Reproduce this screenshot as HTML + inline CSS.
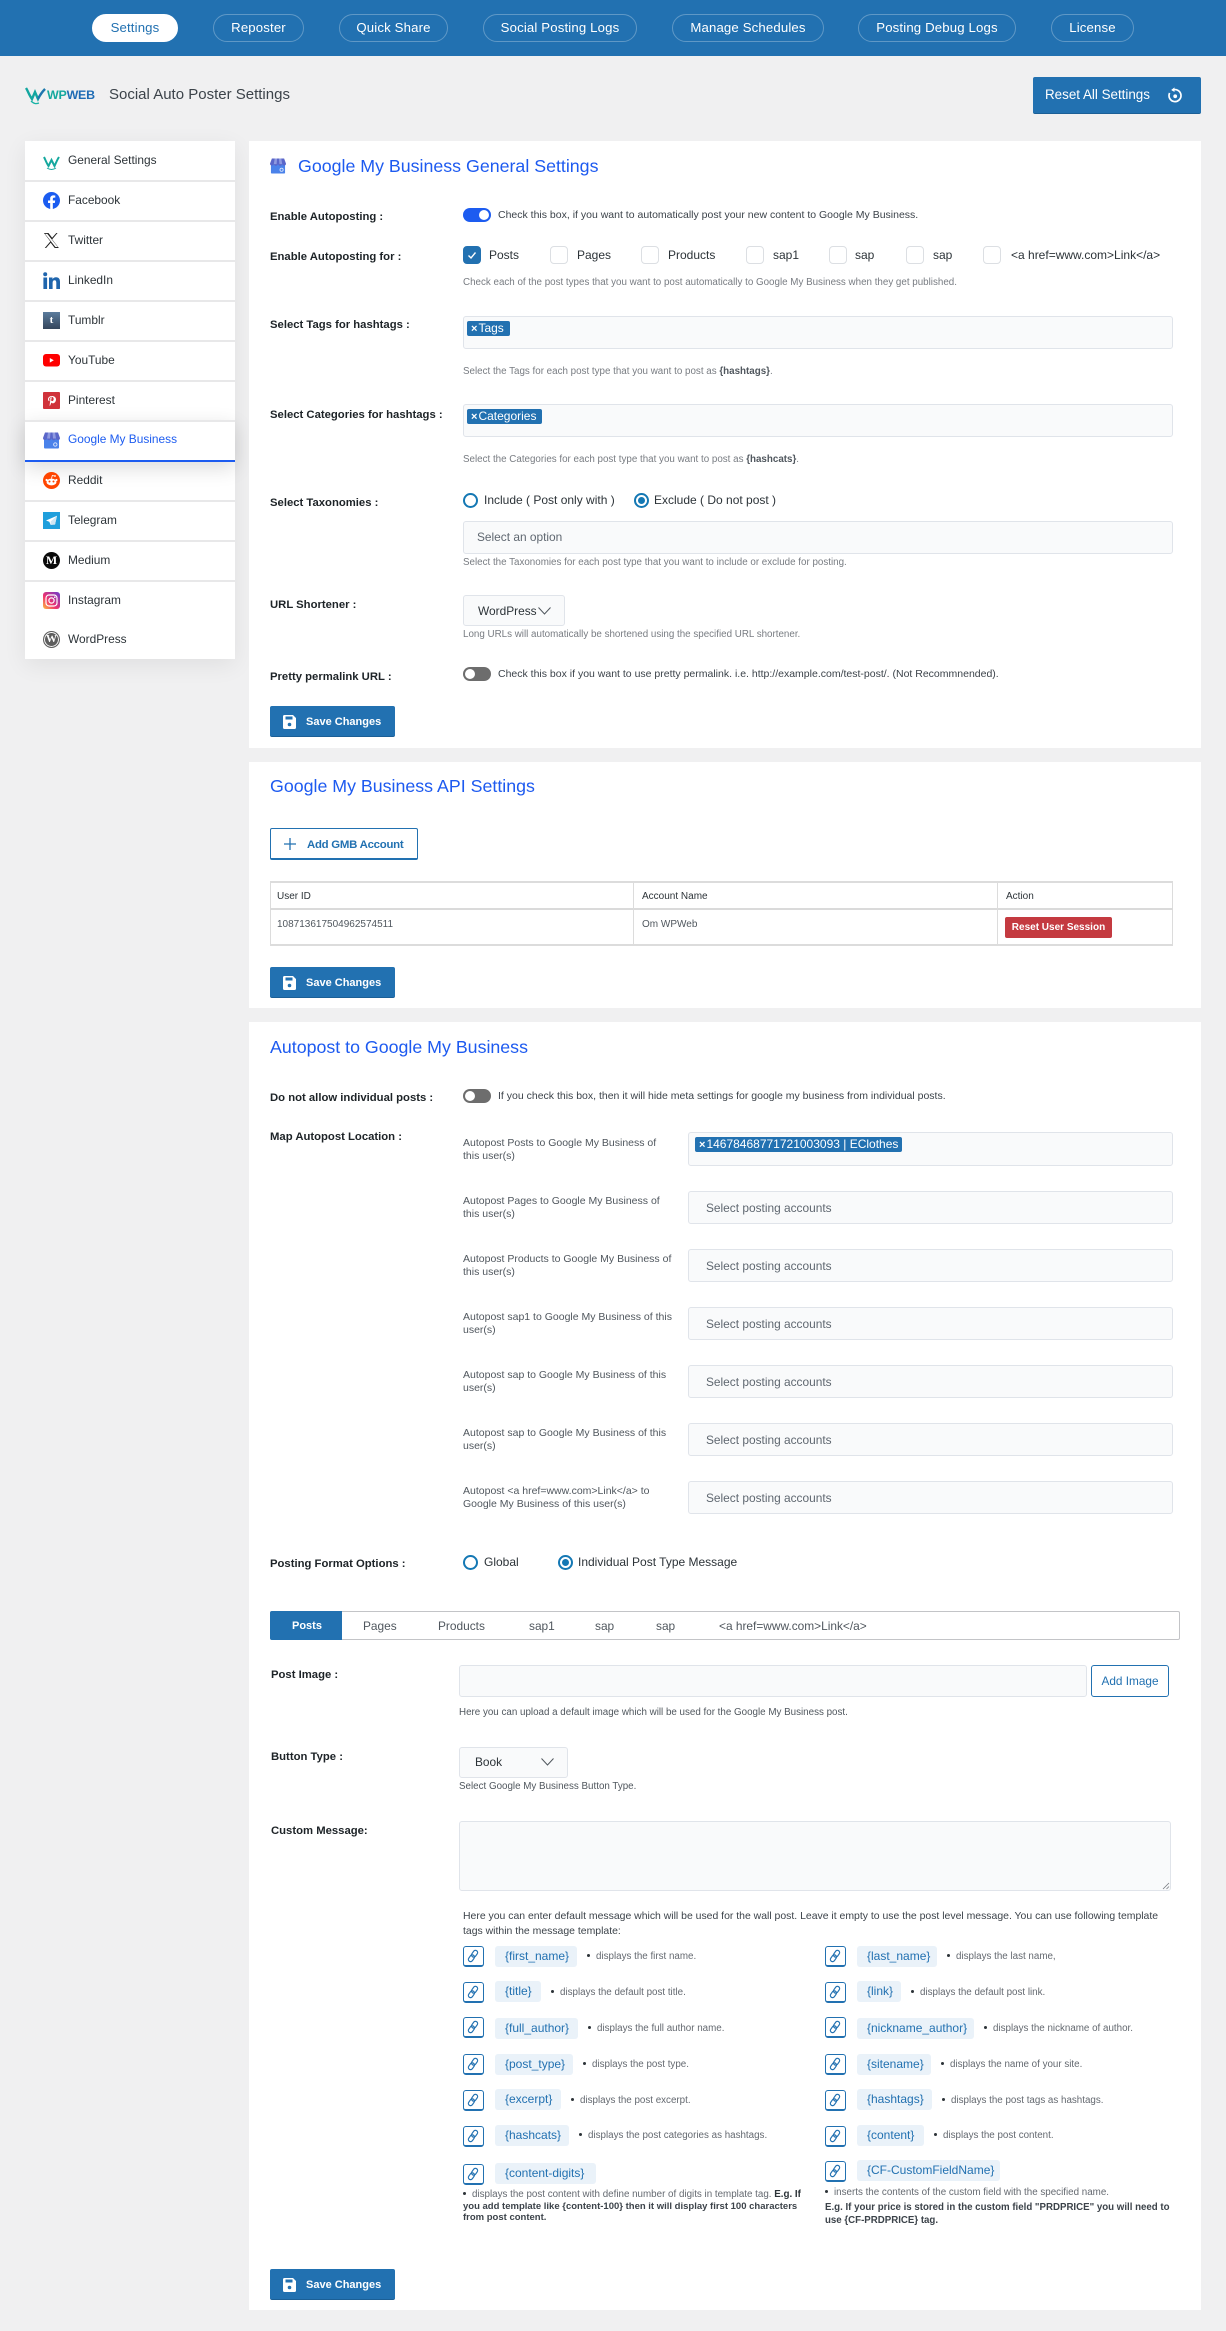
<!DOCTYPE html>
<html lang="en"><head><meta charset="utf-8"><title>Social Auto Poster Settings</title>
<style>
*{box-sizing:border-box}
html,body{margin:0;padding:0}
body{width:1226px;height:2331px;background:#f0f0f1;position:relative;overflow:hidden;font-family:"Liberation Sans",Arial,sans-serif;color:#2c3338}
.a{position:absolute}
.t{position:absolute;white-space:nowrap;line-height:20px;height:20px}
#top{position:absolute;left:0;top:0;width:1226px;height:56px;background:#2271b1}
.pill{position:absolute;top:14px;height:28px;border:1px solid rgba(255,255,255,.28);border-radius:14px;color:#fff;font-size:13.2px;line-height:26px;text-align:center;letter-spacing:.15px;white-space:nowrap}
.pill.on{background:#fff;color:#2271b1;border-color:#fff}
#side{position:absolute;left:25px;top:141px;width:210px;height:518px;background:#fff;box-shadow:0 6px 22px rgba(0,0,0,.07)}
.sep{position:absolute;left:25px;width:210px;height:2px;background:#e8e8e9}
.nav{position:absolute;left:68px;font-size:11.9px;color:#2c3338;white-space:nowrap;line-height:20px}
.ic{position:absolute;left:43px;width:17px;height:17px}
.panel{position:absolute;left:249px;width:952px;background:#fff}
h2{position:absolute;margin:0;font-weight:400;font-size:17.8px;line-height:24px;color:#1d5af0;white-space:nowrap}
.lb{position:absolute;left:270px;font-weight:700;font-size:11.3px;line-height:20px;color:#1d2327;white-space:nowrap}
.tx{position:absolute;font-size:10.5px;line-height:20px;color:#3c434a;white-space:nowrap}
.ds{position:absolute;font-size:9.8px;line-height:20px;color:#787c82;white-space:nowrap}
.ds b{color:#50575e}
.tg{position:absolute;width:28px;height:14px;border-radius:7px;background:#1d5cf0}
.tg i{position:absolute;top:2px;right:2px;width:10px;height:10px;border-radius:50%;background:#fff}
.tg.off{background:#6d6d6d}
.tg.off i{right:auto;left:2px}
.cb{position:absolute;top:246px;width:18px;height:18px;background:#fff;border:1px solid #dcdfe3;border-radius:4px}
.cb.on{background:#2271b1;border-color:#2271b1}
.cl{position:absolute;top:245px;font-size:12px;line-height:20px;color:#2c3338;white-space:nowrap}
.f{position:absolute;background:#f9fafb;border:1px solid #e0e4ea;border-radius:3px}
.ph{position:absolute;font-size:11.9px;line-height:20px;color:#5f6770;white-space:nowrap}
.tag{position:absolute;height:15px;background:#2271b1;border-radius:2px;color:#fff;font-size:12px;line-height:15px;padding-left:4px;white-space:nowrap}
.tag b{font-size:11px;margin-right:1px}
.r{position:absolute;width:15px;height:15px;border:2px solid #1478b4;border-radius:50%;background:#fff}
.r.on::after{content:"";position:absolute;left:2px;top:2px;width:7px;height:7px;border-radius:50%;background:#1478b4}
.rl{position:absolute;font-size:12px;line-height:20px;color:#2c3338;white-space:nowrap}
.save{position:absolute;left:270px;width:125px;height:31px;background:#2271b1;border-radius:2px;border-bottom:1px solid #1b5f96;color:#fff;font-weight:700;font-size:11px;line-height:32px;padding-left:36px;white-space:nowrap}
.save svg{position:absolute;left:13px;top:9px}
.th{position:absolute;font-size:10px;line-height:20px;color:#2c3338;white-space:nowrap}
.ml{position:absolute;left:463px;font-size:10.5px;line-height:12.5px;color:#50575e;white-space:nowrap}
.tb{position:absolute;top:1616px;font-size:11.9px;line-height:20px;color:#50575e;white-space:nowrap}
.lk{position:absolute;width:21px;height:21px;border:1.5px solid #2271b1;border-bottom-width:2px;border-radius:3px;background:#fff}
.lk svg{position:absolute;left:2px;top:2px}
.pl{position:absolute;height:21px;background:#eaf2f9;border-radius:3px;color:#2271b1;font-size:12px;line-height:21px;padding-left:10px;white-space:nowrap}
.dt{position:absolute;font-size:9.8px;line-height:20px;color:#646970;white-space:nowrap}
.dt::before{content:"";display:inline-block;width:3px;height:3px;border-radius:50%;background:#2c3338;margin-right:6px;vertical-align:2px}
</style></head><body>

<div id="top"></div>
<div class="pill on" style="left:92px;width:86px">Settings</div>
<div class="pill" style="left:213px;width:91px">Reposter</div>
<div class="pill" style="left:339px;width:109px">Quick Share</div>
<div class="pill" style="left:483px;width:154px">Social Posting Logs</div>
<div class="pill" style="left:672px;width:152px">Manage Schedules</div>
<div class="pill" style="left:858px;width:158px">Posting Debug Logs</div>
<div class="pill" style="left:1051px;width:83px">License</div>

<svg class="a" style="left:25px;top:86px" width="22" height="19" viewBox="0 0 22 19"><path d="M1 2C3 5 4 9 7 13L10 6 13 13C15 9 17 6 20 3" fill="none" stroke="#13a6a0" stroke-width="2.4"/><path d="M6 15C9 18 11 18 14 17" fill="none" stroke="#19b3a6" stroke-width="1.3"/><path d="M13 13C15 9 17 6 20 3" fill="none" stroke="#2271b1" stroke-width="2"/></svg>
<div class="t" style="left:47px;top:85px;font-size:12.4px;font-weight:700;letter-spacing:-.2px"><span style="color:#14a89e">WP</span><span style="color:#1f6cb5">WEB</span></div>
<div class="t" style="left:109px;top:85px;font-size:15px;color:#3c434a">Social Auto Poster Settings</div>
<div class="a" style="left:1033px;top:77px;width:168px;height:37px;background:#2271b1;border-radius:2px;border-bottom:1px solid #1b5f96"></div>
<div class="t" style="left:1045px;top:85px;font-size:13.4px;color:#fff">Reset All Settings</div>
<svg class="a" style="left:1167px;top:87px" width="16" height="16" viewBox="0 0 16 16"><path d="M5.2 3.3A6 6 0 1 1 2.6 6" fill="none" stroke="#fff" stroke-width="1.7"/><path d="M7.5.4V5L4.2 3z" fill="#fff"/><circle cx="8.2" cy="9.3" r="1.9" fill="#fff"/></svg>

<!-- sidebar -->
<div id="side"></div>
<div class="sep" style="top:180px"></div><div class="sep" style="top:220px"></div><div class="sep" style="top:260px"></div><div class="sep" style="top:300px"></div><div class="sep" style="top:340px"></div><div class="sep" style="top:380px"></div>
<div class="sep" style="top:500px"></div><div class="sep" style="top:540px"></div><div class="sep" style="top:580px"></div>
<div class="a" style="left:25px;top:420px;width:210px;height:42px;background:#fff;border-top:2px solid #e8e8e9;border-bottom:2px solid #1d5cf0;box-shadow:0 6px 20px rgba(0,0,0,.14)"></div>

<svg class="ic" style="top:154px" viewBox="0 0 17 15"><path d="M1 2C2.500 5 3.500 8 5.500 11L8.500 5 11.500 11C13 8 14 5 16 2" fill="none" stroke="#14a89e" stroke-width="2"/><path d="M4 13C7 15 10 15 13 13" fill="none" stroke="#14a89e" stroke-width="1"/></svg>
<div class="nav" style="top:150px">General Settings</div>
<svg class="ic" style="top:192px" viewBox="0 0 24 24"><path fill="#1b5cf0" d="M24 12.073c0-6.627-5.373-12-12-12s-12 5.373-12 12c0 5.990 4.388 10.954 10.125 11.854v-8.385H7.078v-3.470h3.047V9.430c0-3.007 1.792-4.669 4.533-4.669 1.312 0 2.686.235 2.686.235v2.953H15.830c-1.491 0-1.956.925-1.956 1.874v2.250h3.328l-.532 3.470h-2.796v8.385C19.612 23.027 24 18.062 24 12.073z"/></svg>
<div class="nav" style="top:190px">Facebook</div>
<svg class="ic" style="top:232px" viewBox="1 2 22 20"><path fill="#222" fill-rule="evenodd" d="M18.244 2.250h1.600l-7 8.260 8.700 11.240H16.170l-5.214-6.817L4.990 21.750H3.300l7.200-8.400L2.254 2.250H8.080l4.713 6.231zm-1.161 18.200h3L6.584 3.500H3.617z"/></svg>
<div class="nav" style="top:230px">Twitter</div>
<svg class="ic" style="top:272px" viewBox="0 0 17 17"><circle cx="2.200" cy="2.200" r="2" fill="#1f65ad"/><rect x=".4" y="5.500" width="3.700" height="11.500" fill="#1f65ad"/><path fill="#1f65ad" d="M6 5.500h3.500v1.600C10.200 6 11.500 5.200 13 5.200c3 0 4 2 4 4.800v7h-3.700v-6.200c0-1.500-.4-2.500-1.700-2.500-1.400 0-2 1-2 2.500V17H6z"/></svg>
<div class="nav" style="top:270px">LinkedIn</div>
<div class="ic" style="top:312px;height:17px;background:linear-gradient(#5b7c9d,#35465c);color:#fff;font:700 11px/17px 'Liberation Serif',serif;text-align:center">t</div>
<div class="nav" style="top:310px">Tumblr</div>
<svg class="ic" style="top:353px;height:15px" viewBox="0 0 17 13"><rect width="17" height="12.500" rx="3" fill="#f00"/><path d="M6.800 4l4 2.300-4 2.300z" fill="#fff"/></svg>
<div class="nav" style="top:350px">YouTube</div>
<svg class="ic" style="top:392px" viewBox="0 0 17 17"><rect width="17" height="17" rx="1" fill="#d0323a"/><path d="M8.800 4C6.500 4 5 5.500 5 7.300c0 1 .5 1.800 1.300 2 .3-1 .1-1.100-.1-1.700-.4-1.400.8-2.700 2.400-2.700 2.900 0 2.500 4.200.6 4.200-.8 0-1.200-.6-1-1.300l.5-1.900c.2-.9-1.200-1-1.400.3-.1.500.1 1 .1 1L6.700 12.500c-.1.600 0 1.400 0 1.500.6-.6 1-1.500 1.600-3.500.3.500.9.800 1.500.8 1.900 0 3.200-1.800 3.200-3.900C13 5.300 11.200 4 8.800 4z" fill="#fff"/></svg>
<div class="nav" style="top:390px">Pinterest</div>
<svg class="ic" style="top:432px" viewBox="0 0 17 16"><path d="M1 5h15v10a1 1 0 0 1-1 1H2a1 1 0 0 1-1-1z" fill="#4a82ea"/><path d="M2 0h13l2 5.500a2 2 0 0 1-4 0 2.200 2.200 0 0 1-4.500 0 2.200 2.200 0 0 1-4.500 0 2 2 0 0 1-4 0z" fill="#5a66c9"/><path d="M5 0h2.500l-.5 6H4zM9.500 0H12l1 6h-3z" fill="#8e9ae0"/><circle cx="12.300" cy="12" r="1.700" fill="none" stroke="#dce7fb" stroke-width=".9"/></svg>
<div class="nav" style="top:429px;color:#1d5cf0">Google My Business</div>
<svg class="ic" style="top:472px" viewBox="0 0 17 17"><circle cx="8.500" cy="8.500" r="8.500" fill="#ff4500"/><ellipse cx="8.500" cy="10" rx="5" ry="3.400" fill="#fff"/><circle cx="6.500" cy="9.500" r="1" fill="#ff4500"/><circle cx="10.500" cy="9.500" r="1" fill="#ff4500"/><circle cx="3.600" cy="8" r="1.100" fill="#fff"/><circle cx="13.400" cy="8" r="1.100" fill="#fff"/><path d="M8.500 6.500L9.300 3.500l2.200.5" fill="none" stroke="#fff" stroke-width=".8"/><circle cx="12" cy="4" r=".9" fill="#fff"/></svg>
<div class="nav" style="top:470px">Reddit</div>
<svg class="ic" style="top:512px" viewBox="0 0 17 17"><rect width="17" height="17" fill="#1f9fdc"/><path d="M14 3.800L3 8.500l3.300 1.200L7.700 13l1.800-2.200 2.500 1.800z" fill="#fff"/><path d="M7.700 13V9.500L14 3.800 12 12.600z" fill="#cfe6f3"/></svg>
<div class="nav" style="top:510px">Telegram</div>
<div class="ic" style="top:552px;border-radius:50%;background:#0a0a0a;color:#fff;font:700 12px/17px 'Liberation Serif',serif;text-align:center">M</div>
<div class="nav" style="top:550px">Medium</div>
<svg class="ic" style="top:592px" viewBox="0 0 17 17"><defs><linearGradient id="ig" x1="0" y1="1" x2="1" y2="0"><stop offset="0" stop-color="#fdc03e"/><stop offset=".4" stop-color="#f0336e"/><stop offset="1" stop-color="#6a3bd0"/></linearGradient></defs><rect width="17" height="17" rx="3" fill="url(#ig)"/><rect x="3" y="3" width="11" height="11" rx="3" fill="none" stroke="#fff" stroke-width="1.200"/><circle cx="8.500" cy="8.500" r="2.600" fill="none" stroke="#fff" stroke-width="1.200"/><circle cx="11.800" cy="5.200" r=".8" fill="#fff"/></svg>
<div class="nav" style="top:590px">Instagram</div>
<div class="ic" style="top:631px;border-radius:50%;background:#5e5e5e;color:#fff;border:1px solid #5e5e5e;box-shadow:inset 0 0 0 1px #fff;font:700 11px/15px 'Liberation Serif',serif;text-align:center">W</div>
<div class="nav" style="top:629px">WordPress</div>

<!-- panel 1 -->
<div class="panel" style="top:141px;height:607px"></div>
<svg class="a" style="left:270px;top:158px" width="16" height="16" viewBox="0 0 17 16"><path d="M1 5h15v10a1 1 0 0 1-1 1H2a1 1 0 0 1-1-1z" fill="#4a82ea"/><path d="M2 0h13l2 5.500a2 2 0 0 1-4 0 2.200 2.200 0 0 1-4.500 0 2.200 2.200 0 0 1-4.500 0 2 2 0 0 1-4 0z" fill="#5a66c9"/><path d="M5 0h2.500l-.5 6H4zM9.500 0H12l1 6h-3z" fill="#8e9ae0"/><circle cx="12.300" cy="12" r="1.700" fill="none" stroke="#dce7fb" stroke-width=".9"/></svg>
<h2 style="left:298px;top:154px">Google My Business General Settings</h2>

<div class="lb" style="top:207px">Enable Autoposting :</div>
<div class="tg" style="left:463px;top:208px"><i></i></div>
<div class="tx" style="left:498px;top:205px">Check this box, if you want to automatically post your new content to Google My Business.</div>

<div class="lb" style="top:247px">Enable Autoposting for :</div>
<div class="cb on" style="left:463px"><svg width="16" height="16" viewBox="0 0 16 16" style="position:absolute;left:0;top:0"><path d="M4.500 8.500L7 11l4.500-5.500" fill="none" stroke="#fff" stroke-width="1.400"/></svg></div>
<div class="cl" style="left:489px;">Posts</div>
<div class="cb" style="left:550px"></div><div class="cl" style="left:577px">Pages</div>
<div class="cb" style="left:641px"></div><div class="cl" style="left:668px">Products</div>
<div class="cb" style="left:746px"></div><div class="cl" style="left:773px">sap1</div>
<div class="cb" style="left:829px"></div><div class="cl" style="left:855px">sap</div>
<div class="cb" style="left:906px"></div><div class="cl" style="left:933px">sap</div>
<div class="cb" style="left:983px"></div><div class="cl" style="left:1011px">&lt;a href=www.com&gt;Link&lt;/a&gt;</div>
<div class="ds" style="left:463px;top:273px">Check each of the post types that you want to post automatically to Google My Business when they get published.</div>

<div class="lb" style="top:315px">Select Tags for hashtags :</div>
<div class="f" style="left:463px;top:316px;width:710px;height:33px"></div>
<div class="tag" style="left:467px;top:321px;width:43px"><b>×</b>Tags</div>
<div class="ds" style="left:463px;top:362px">Select the Tags for each post type that you want to post as <b>{hashtags}</b>.</div>

<div class="lb" style="top:405px">Select Categories for hashtags :</div>
<div class="f" style="left:463px;top:404px;width:710px;height:33px"></div>
<div class="tag" style="left:467px;top:409px;width:75px"><b>×</b>Categories</div>
<div class="ds" style="left:463px;top:450px">Select the Categories for each post type that you want to post as <b>{hashcats}</b>.</div>

<div class="lb" style="top:493px">Select Taxonomies :</div>
<div class="r" style="left:463px;top:493px"></div>
<div class="rl" style="left:484px;top:490px">Include ( Post only with )</div>
<div class="r on" style="left:634px;top:493px"></div>
<div class="rl" style="left:654px;top:490px">Exclude ( Do not post )</div>
<div class="f" style="left:463px;top:521px;width:710px;height:33px"></div>
<div class="ph" style="left:477px;top:527px">Select an option</div>
<div class="ds" style="left:463px;top:553px">Select the Taxonomies for each post type that you want to include or exclude for posting.</div>

<div class="lb" style="top:595px">URL Shortener :</div>
<div class="f" style="left:463px;top:595px;width:102px;height:31px"></div>
<div class="ph" style="left:478px;top:601px;color:#2c3338">WordPress</div>
<svg class="a" style="left:538px;top:607px" width="13" height="8" viewBox="0 0 13 8"><path d="M.5.500L6.500 7 12.500.500" fill="none" stroke="#50575e" stroke-width="1"/></svg>
<div class="ds" style="left:463px;top:625px">Long URLs will automatically be shortened using the specified URL shortener.</div>

<div class="lb" style="top:667px">Pretty permalink URL :</div>
<div class="tg off" style="left:463px;top:667px"><i></i></div>
<div class="tx" style="left:498px;top:664px">Check this box if you want to use pretty permalink. i.e. http://example.com/test-post/. (Not Recommnended).</div>

<div class="save" style="top:706px"><svg width="13" height="14" viewBox="0 0 13 14"><path d="M1.500 0H10l3 3v9.500a1.500 1.500 0 0 1-1.500 1.500h-10A1.500 1.500 0 0 1 0 12.500v-11A1.500 1.500 0 0 1 1.500 0z" fill="#fff"/><rect x="2.500" y="1.500" width="7" height="3" fill="#2271b1"/><circle cx="6.500" cy="9.500" r="1.800" fill="#2271b1"/></svg>Save Changes</div>

<!-- panel 2 -->
<div class="panel" style="top:762px;height:246px"></div>
<h2 style="left:270px;top:774px">Google My Business API Settings</h2>
<div class="a" style="left:270px;top:828px;width:148px;height:32px;background:#fff;border:1px solid #2271b1;border-bottom-width:2px;border-radius:2px"></div>
<svg class="a" style="left:284px;top:838px" width="12" height="12" viewBox="0 0 12 12"><path d="M6 0v12M0 6h12" stroke="#2271b1" stroke-width="1.300"/></svg>
<div class="t" style="left:307px;top:835px;font-size:11.4px;font-weight:700;color:#2271b1;letter-spacing:-.25px">Add GMB Account</div>

<div class="a" style="left:270px;top:881px;width:903px;height:65px;border:1px solid #dcdcdc;border-bottom-width:2px;border-top-width:2px"></div>
<div class="a" style="left:270px;top:908px;width:903px;height:2px;background:#dadada"></div>
<div class="a" style="left:633px;top:881px;width:1px;height:65px;background:#dcdcdc"></div>
<div class="a" style="left:997px;top:881px;width:1px;height:65px;background:#dcdcdc"></div>
<div class="th" style="left:277px;top:887px">User ID</div>
<div class="th" style="left:642px;top:887px">Account Name</div>
<div class="th" style="left:1006px;top:887px">Action</div>
<div class="th" style="left:277px;top:915px;color:#50575e">108713617504962574511</div>
<div class="th" style="left:642px;top:915px;color:#50575e">Om WPWeb</div>
<div class="a" style="left:1005px;top:917px;width:107px;height:21px;background:#c43a40;border-radius:2px;color:#fff;font-weight:700;font-size:10px;line-height:22px;text-align:center;white-space:nowrap">Reset User Session</div>

<div class="save" style="top:967px"><svg width="13" height="14" viewBox="0 0 13 14"><path d="M1.500 0H10l3 3v9.500a1.500 1.500 0 0 1-1.500 1.500h-10A1.500 1.500 0 0 1 0 12.500v-11A1.500 1.500 0 0 1 1.500 0z" fill="#fff"/><rect x="2.500" y="1.500" width="7" height="3" fill="#2271b1"/><circle cx="6.500" cy="9.500" r="1.800" fill="#2271b1"/></svg>Save Changes</div>

<!-- panel 3 -->
<div class="panel" style="top:1022px;height:1288px"></div>
<h2 style="left:270px;top:1035px">Autopost to Google My Business</h2>

<div class="lb" style="top:1088px">Do not allow individual posts :</div>
<div class="tg off" style="left:463px;top:1089px"><i></i></div>
<div class="tx" style="left:498px;top:1086px">If you check this box, then it will hide meta settings for google my business from individual posts.</div>

<div class="lb" style="top:1127px">Map Autopost Location :</div>

<div class="ml" style="top:1137px">Autopost Posts to Google My Business of<br>this user(s)</div>
<div class="f" style="left:688px;top:1132px;width:485px;height:34px"></div>
<div class="tag" style="left:695px;top:1137px;width:207px"><b>×</b>14678468771721003093 | EClothes</div>

<div class="ml" style="top:1195px">Autopost Pages to Google My Business of<br>this user(s)</div>
<div class="f" style="left:688px;top:1191px;width:485px;height:33px"></div><div class="ph" style="left:706px;top:1198px">Select posting accounts</div>

<div class="ml" style="top:1253px">Autopost Products to Google My Business of<br>this user(s)</div>
<div class="f" style="left:688px;top:1249px;width:485px;height:33px"></div><div class="ph" style="left:706px;top:1256px">Select posting accounts</div>

<div class="ml" style="top:1311px">Autopost sap1 to Google My Business of this<br>user(s)</div>
<div class="f" style="left:688px;top:1307px;width:485px;height:33px"></div><div class="ph" style="left:706px;top:1314px">Select posting accounts</div>

<div class="ml" style="top:1369px">Autopost sap to Google My Business of this<br>user(s)</div>
<div class="f" style="left:688px;top:1365px;width:485px;height:33px"></div><div class="ph" style="left:706px;top:1372px">Select posting accounts</div>

<div class="ml" style="top:1427px">Autopost sap to Google My Business of this<br>user(s)</div>
<div class="f" style="left:688px;top:1423px;width:485px;height:33px"></div><div class="ph" style="left:706px;top:1430px">Select posting accounts</div>

<div class="ml" style="top:1485px">Autopost &lt;a href=www.com&gt;Link&lt;/a&gt; to<br>Google My Business of this user(s)</div>
<div class="f" style="left:688px;top:1481px;width:485px;height:33px"></div><div class="ph" style="left:706px;top:1488px">Select posting accounts</div>

<div class="lb" style="top:1554px">Posting Format Options :</div>
<div class="r" style="left:463px;top:1555px"></div><div class="rl" style="left:484px;top:1552px">Global</div>
<div class="r on" style="left:558px;top:1555px"></div><div class="rl" style="left:578px;top:1552px">Individual Post Type Message</div>

<!-- tabs -->
<div class="a" style="left:270px;top:1611px;width:910px;height:29px;border:1px solid #c3c4c7;border-radius:2px"></div>
<div class="a" style="left:270px;top:1611px;width:72px;height:29px;background:#2271b1;border-radius:2px 0 0 2px"></div>
<div class="tb" style="left:292px;color:#fff;font-weight:700;font-size:11px">Posts</div>
<div class="tb" style="left:363px">Pages</div>
<div class="tb" style="left:438px">Products</div>
<div class="tb" style="left:529px">sap1</div>
<div class="tb" style="left:595px">sap</div>
<div class="tb" style="left:656px">sap</div>
<div class="tb" style="left:719px">&lt;a href=www.com&gt;Link&lt;/a&gt;</div>

<div class="lb" style="left:271px;top:1665px">Post Image :</div>
<div class="f" style="left:459px;top:1665px;width:628px;height:32px"></div>
<div class="a" style="left:1091px;top:1665px;width:78px;height:32px;background:#fff;border:1px solid #2271b1;border-radius:3px;color:#2271b1;font-size:11.8px;line-height:30px;text-align:center">Add Image</div>
<div class="ds" style="left:459px;top:1703px;color:#50575e">Here you can upload a default image which will be used for the Google My Business post.</div>

<div class="lb" style="left:271px;top:1747px">Button Type :</div>
<div class="f" style="left:459px;top:1747px;width:109px;height:31px"></div>
<div class="ph" style="left:475px;top:1752px;color:#2c3338">Book</div>
<svg class="a" style="left:541px;top:1758px" width="13" height="8" viewBox="0 0 13 8"><path d="M.5.500L6.500 7 12.500.500" fill="none" stroke="#50575e" stroke-width="1"/></svg>
<div class="ds" style="left:459px;top:1777px;color:#50575e">Select Google My Business Button Type.</div>

<div class="lb" style="left:271px;top:1821px">Custom Message:</div>
<div class="f" style="left:459px;top:1821px;width:712px;height:70px"></div>
<svg class="a" style="left:1162px;top:1882px" width="8" height="8" viewBox="0 0 8 8"><path d="M7 1L1 7M7 4.500L4.500 7" stroke="#787c82" stroke-width=".8"/></svg>

<div class="ds" style="left:463px;top:1907px;font-size:10.45px;color:#3c434a">Here you can enter default message which will be used for the wall post. Leave it empty to use the post level message. You can use following template</div>
<div class="ds" style="left:463px;top:1922px;font-size:10.45px;color:#3c434a">tags within the message template:</div>

<!-- template tags -->
<div class="lk" style="left:463px;top:1946px"><svg width="14" height="14" viewBox="0 0 14 14"><g transform="rotate(-55 7 7)" fill="none" stroke="#2271b1" stroke-width="1.200"><rect x=".6" y="4.800" width="7.300" height="4.400" rx="2.200"/><rect x="6.100" y="4.800" width="7.300" height="4.400" rx="2.200"/></g></svg></div>
<div class="pl" style="left:495px;top:1946px;width:82px">{first_name}</div>
<div class="dt" style="left:587px;top:1947px">displays the first name.</div>

<div class="lk" style="left:825px;top:1946px"><svg width="14" height="14" viewBox="0 0 14 14"><g transform="rotate(-55 7 7)" fill="none" stroke="#2271b1" stroke-width="1.200"><rect x=".6" y="4.800" width="7.300" height="4.400" rx="2.200"/><rect x="6.100" y="4.800" width="7.300" height="4.400" rx="2.200"/></g></svg></div>
<div class="pl" style="left:857px;top:1946px;width:80px">{last_name}</div>
<div class="dt" style="left:947px;top:1947px">displays the last name,</div>

<div class="lk" style="left:463px;top:1982px"><svg width="14" height="14" viewBox="0 0 14 14"><g transform="rotate(-55 7 7)" fill="none" stroke="#2271b1" stroke-width="1.200"><rect x=".6" y="4.800" width="7.300" height="4.400" rx="2.200"/><rect x="6.100" y="4.800" width="7.300" height="4.400" rx="2.200"/></g></svg></div>
<div class="pl" style="left:495px;top:1981px;width:46px">{title}</div>
<div class="dt" style="left:551px;top:1983px">displays the default post title.</div>

<div class="lk" style="left:825px;top:1982px"><svg width="14" height="14" viewBox="0 0 14 14"><g transform="rotate(-55 7 7)" fill="none" stroke="#2271b1" stroke-width="1.200"><rect x=".6" y="4.800" width="7.300" height="4.400" rx="2.200"/><rect x="6.100" y="4.800" width="7.300" height="4.400" rx="2.200"/></g></svg></div>
<div class="pl" style="left:857px;top:1981px;width:44px">{link}</div>
<div class="dt" style="left:911px;top:1983px">displays the default post link.</div>

<div class="lk" style="left:463px;top:2017px"><svg width="14" height="14" viewBox="0 0 14 14"><g transform="rotate(-55 7 7)" fill="none" stroke="#2271b1" stroke-width="1.200"><rect x=".6" y="4.800" width="7.300" height="4.400" rx="2.200"/><rect x="6.100" y="4.800" width="7.300" height="4.400" rx="2.200"/></g></svg></div>
<div class="pl" style="left:495px;top:2018px;width:83px">{full_author}</div>
<div class="dt" style="left:588px;top:2019px">displays the full author name.</div>

<div class="lk" style="left:825px;top:2017px"><svg width="14" height="14" viewBox="0 0 14 14"><g transform="rotate(-55 7 7)" fill="none" stroke="#2271b1" stroke-width="1.200"><rect x=".6" y="4.800" width="7.300" height="4.400" rx="2.200"/><rect x="6.100" y="4.800" width="7.300" height="4.400" rx="2.200"/></g></svg></div>
<div class="pl" style="left:857px;top:2018px;width:117px">{nickname_author}</div>
<div class="dt" style="left:984px;top:2019px">displays the nickname of author.</div>

<div class="lk" style="left:463px;top:2054px"><svg width="14" height="14" viewBox="0 0 14 14"><g transform="rotate(-55 7 7)" fill="none" stroke="#2271b1" stroke-width="1.200"><rect x=".6" y="4.800" width="7.300" height="4.400" rx="2.200"/><rect x="6.100" y="4.800" width="7.300" height="4.400" rx="2.200"/></g></svg></div>
<div class="pl" style="left:495px;top:2054px;width:78px">{post_type}</div>
<div class="dt" style="left:583px;top:2055px">displays the post type.</div>

<div class="lk" style="left:825px;top:2054px"><svg width="14" height="14" viewBox="0 0 14 14"><g transform="rotate(-55 7 7)" fill="none" stroke="#2271b1" stroke-width="1.200"><rect x=".6" y="4.800" width="7.300" height="4.400" rx="2.200"/><rect x="6.100" y="4.800" width="7.300" height="4.400" rx="2.200"/></g></svg></div>
<div class="pl" style="left:857px;top:2054px;width:74px">{sitename}</div>
<div class="dt" style="left:941px;top:2055px">displays the name of your site.</div>

<div class="lk" style="left:463px;top:2090px"><svg width="14" height="14" viewBox="0 0 14 14"><g transform="rotate(-55 7 7)" fill="none" stroke="#2271b1" stroke-width="1.200"><rect x=".6" y="4.800" width="7.300" height="4.400" rx="2.200"/><rect x="6.100" y="4.800" width="7.300" height="4.400" rx="2.200"/></g></svg></div>
<div class="pl" style="left:495px;top:2089px;width:66px">{excerpt}</div>
<div class="dt" style="left:571px;top:2091px">displays the post excerpt.</div>

<div class="lk" style="left:825px;top:2090px"><svg width="14" height="14" viewBox="0 0 14 14"><g transform="rotate(-55 7 7)" fill="none" stroke="#2271b1" stroke-width="1.200"><rect x=".6" y="4.800" width="7.300" height="4.400" rx="2.200"/><rect x="6.100" y="4.800" width="7.300" height="4.400" rx="2.200"/></g></svg></div>
<div class="pl" style="left:857px;top:2089px;width:75px">{hashtags}</div>
<div class="dt" style="left:942px;top:2091px">displays the post tags as hashtags.</div>

<div class="lk" style="left:463px;top:2126px"><svg width="14" height="14" viewBox="0 0 14 14"><g transform="rotate(-55 7 7)" fill="none" stroke="#2271b1" stroke-width="1.200"><rect x=".6" y="4.800" width="7.300" height="4.400" rx="2.200"/><rect x="6.100" y="4.800" width="7.300" height="4.400" rx="2.200"/></g></svg></div>
<div class="pl" style="left:495px;top:2125px;width:74px">{hashcats}</div>
<div class="dt" style="left:579px;top:2126px">displays the post categories as hashtags.</div>

<div class="lk" style="left:825px;top:2126px"><svg width="14" height="14" viewBox="0 0 14 14"><g transform="rotate(-55 7 7)" fill="none" stroke="#2271b1" stroke-width="1.200"><rect x=".6" y="4.800" width="7.300" height="4.400" rx="2.200"/><rect x="6.100" y="4.800" width="7.300" height="4.400" rx="2.200"/></g></svg></div>
<div class="pl" style="left:857px;top:2125px;width:67px">{content}</div>
<div class="dt" style="left:934px;top:2126px">displays the post content.</div>

<div class="lk" style="left:463px;top:2164px"><svg width="14" height="14" viewBox="0 0 14 14"><g transform="rotate(-55 7 7)" fill="none" stroke="#2271b1" stroke-width="1.200"><rect x=".6" y="4.800" width="7.300" height="4.400" rx="2.200"/><rect x="6.100" y="4.800" width="7.300" height="4.400" rx="2.200"/></g></svg></div>
<div class="pl" style="left:495px;top:2163px;width:101px">{content-digits}</div>
<div class="dt" style="left:463px;top:2185px">displays the post content with define number of digits in template tag. <b style="color:#2c3338">E.g. If</b></div>
<div class="t" style="left:463px;top:2197px;font-size:9.5px;font-weight:700;color:#3c434a">you add template like {content-100} then it will display first 100 characters</div>
<div class="t" style="left:463px;top:2208px;font-size:9.5px;font-weight:700;color:#3c434a">from post content.</div>

<div class="lk" style="left:825px;top:2161px"><svg width="14" height="14" viewBox="0 0 14 14"><g transform="rotate(-55 7 7)" fill="none" stroke="#2271b1" stroke-width="1.200"><rect x=".6" y="4.800" width="7.300" height="4.400" rx="2.200"/><rect x="6.100" y="4.800" width="7.300" height="4.400" rx="2.200"/></g></svg></div>
<div class="pl" style="left:857px;top:2160px;width:143px">{CF-CustomFieldName}</div>
<div class="dt" style="left:825px;top:2183px">inserts the contents of the custom field with the specified name.</div>
<div class="t" style="left:825px;top:2198px;font-size:9.7px;font-weight:700;color:#3c434a">E.g. If your price is stored in the custom field "PRDPRICE" you will need to</div>
<div class="t" style="left:825px;top:2211px;font-size:9.7px;font-weight:700;color:#3c434a">use {CF-PRDPRICE} tag.</div>

<div class="save" style="top:2269px"><svg width="13" height="14" viewBox="0 0 13 14"><path d="M1.500 0H10l3 3v9.500a1.500 1.500 0 0 1-1.500 1.500h-10A1.500 1.500 0 0 1 0 12.500v-11A1.500 1.500 0 0 1 1.500 0z" fill="#fff"/><rect x="2.500" y="1.500" width="7" height="3" fill="#2271b1"/><circle cx="6.500" cy="9.500" r="1.800" fill="#2271b1"/></svg>Save Changes</div>

</body></html>
